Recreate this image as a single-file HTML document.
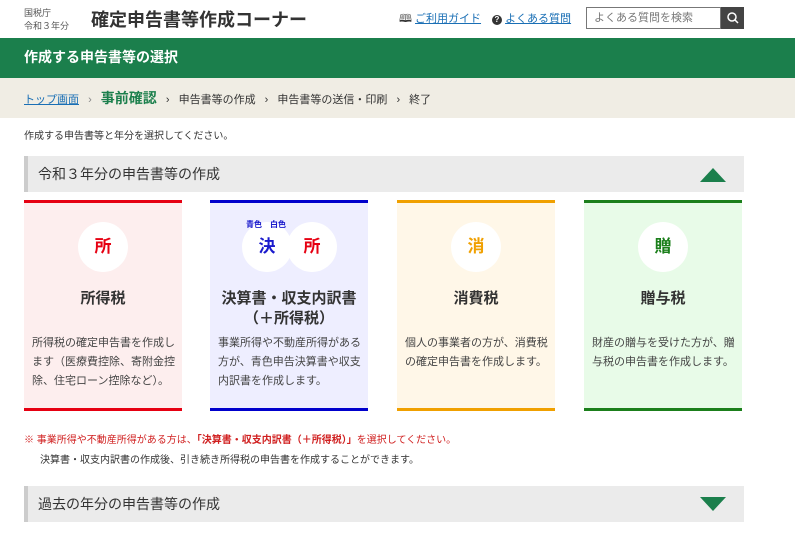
<!DOCTYPE html><html><head><meta charset="utf-8"><style>
*{margin:0;padding:0;box-sizing:border-box}
body{width:795px;height:535px;overflow:hidden;background:#fff;font-family:"Liberation Sans","Noto Sans CJK JP",sans-serif;color:#333;position:relative}
.a{position:absolute}
a{color:#1a6fb5;text-decoration:underline}
.card{position:absolute;top:200px;width:158px;height:211px;border-top:3px solid;border-bottom:3px solid}
.circ{position:absolute;width:50px;height:50px;border-radius:50%;background:#fff;font-weight:bold;font-size:17px;text-align:center;line-height:50px}
.ttl{position:absolute;left:0;right:0;text-align:center;font-weight:bold;font-size:15px;color:#333}
.desc{position:absolute;left:8px;right:6px;font-size:11px;line-height:19px;color:#444}
.sec{position:absolute;left:24px;width:720px;height:36px;background:#ebebeb;border-left:4px solid #ccc;font-size:14px;line-height:36px;padding-left:10px;color:#333}
</style></head><body>
<div class="a" style="left:24px;top:7px;font-size:9px;color:#555;line-height:13px">国税庁<br>令和３年分</div>
<div class="a" style="left:91px;top:6px;font-size:18px;font-weight:bold;color:#333">確定申告書等作成コーナー</div>
<div class="a" style="left:399px;top:10px;font-size:11px;color:#333">🕮 <a>ご利用ガイド</a></div>
<div class="a" style="left:492px;top:10px;font-size:11px"><span style="display:inline-block;width:10px;height:10px;border-radius:50%;background:#333;color:#fff;font-size:8px;text-align:center;line-height:10px;font-weight:bold">?</span> <a>よくある質問</a></div>
<div class="a" style="left:586px;top:7px;width:135px;height:22px;border:1px solid #777;font-size:11px;color:#777;line-height:20px;padding-left:7px">よくある質問を検索</div>
<div class="a" style="left:721px;top:7px;width:23px;height:22px;background:#444"><svg width="23" height="22"><circle cx="11" cy="10" r="4" fill="none" stroke="#fff" stroke-width="1.5"/><line x1="14" y1="13" x2="17" y2="16" stroke="#fff" stroke-width="1.5"/></svg></div>
<div class="a" style="left:0;top:38px;width:795px;height:40px;background:#1b7f4c;color:#fff;font-weight:bold;font-size:14px;line-height:38px;padding-left:24px">作成する申告書等の選択</div>
<div class="a" style="left:0;top:78px;width:795px;height:40px;background:#f0ede4;font-size:11px;line-height:40px;padding-left:24px;color:#333"><a>トップ画面</a> <span style="color:#888;margin:0 6px">›</span> <b style="color:#1b7f4c;font-size:14px">事前確認</b> <span style="margin:0 6px">›</span> 申告書等の作成 <span style="margin:0 6px">›</span> 申告書等の送信・印刷 <span style="margin:0 6px">›</span> 終了</div>
<div class="a" style="left:24px;top:127px;font-size:10px;color:#333">作成する申告書等と年分を選択してください。</div>
<div class="sec" style="top:156px">令和３年分の申告書等の作成<svg class="a" style="left:672px;top:12px" width="26" height="14"><polygon points="13,0 26,14 0,14" fill="#1b7f4c"/></svg></div>

<div class="card" style="left:24px;border-color:#e60012;background:#fdeeee"><div class="circ" style="left:54px;top:19px;color:#e60012">所</div><div class="ttl" style="top:84px">所得税</div><div class="desc" style="top:131px">所得税の確定申告書を作成します（医療費控除、寄附金控除、住宅ローン控除など）。</div></div>
<div class="card" style="left:210px;border-color:#0000cc;background:#eeeeff"><div class="circ" style="left:32px;top:19px;color:#1a1acc">決</div><div class="circ" style="left:77px;top:19px;color:#e60012">所</div><div class="a" style="left:36px;top:16px;font-size:8px;color:#1a1acc;font-weight:bold">青色　白色</div><div class="ttl" style="top:86px;line-height:20px">決算書・収支内訳書<br>（＋所得税）</div><div class="desc" style="top:131px">事業所得や不動産所得がある方が、青色申告決算書や収支内訳書を作成します。</div></div>
<div class="card" style="left:397px;border-color:#f0a000;background:#fff7e8"><div class="circ" style="left:54px;top:19px;color:#f0a000">消</div><div class="ttl" style="top:84px">消費税</div><div class="desc" style="top:131px">個人の事業者の方が、消費税の確定申告書を作成します。</div></div>
<div class="card" style="left:584px;border-color:#1b7f1b;background:#e8fbe8"><div class="circ" style="left:54px;top:19px;color:#1b7f1b">贈</div><div class="ttl" style="top:84px">贈与税</div><div class="desc" style="top:131px">財産の贈与を受けた方が、贈与税の申告書を作成します。</div></div>

<div class="a" style="left:24px;top:431px;font-size:10px;color:#d02020">※ 事業所得や不動産所得がある方は、<b>「決算書・収支内訳書（＋所得税）」</b>を選択してください。</div>
<div class="a" style="left:40px;top:451px;font-size:10px;color:#333">決算書・収支内訳書の作成後、引き続き所得税の申告書を作成することができます。</div>
<div class="sec" style="top:486px">過去の年分の申告書等の作成<svg class="a" style="left:672px;top:11px" width="26" height="14"><polygon points="0,0 26,0 13,14" fill="#1b7f4c"/></svg></div>
</body></html>
